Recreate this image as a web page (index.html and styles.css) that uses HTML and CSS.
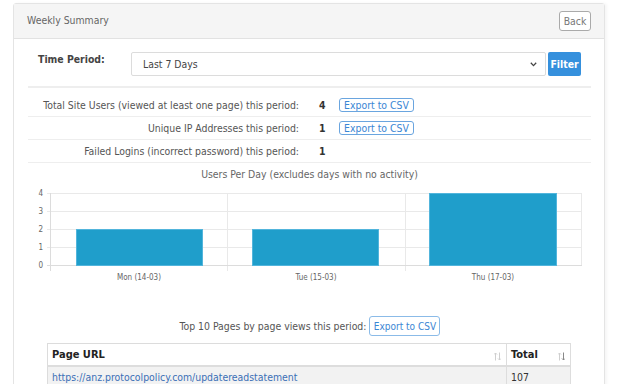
FILE: index.html
```html
<!DOCTYPE html>
<html lang="en">

<head>
    <meta charset="UTF-8">
    <meta name="viewport" content="width=device-width, initial-scale=1.0">
    <title>Weekly Summary</title>
    <link rel="stylesheet" href="styles.css">
</head>

<body>
    <main class="panel">
        <div class="panel__heading">
            <span class="panel__title">Weekly Summary</span>
            <button class="btn btn--back">Back</button>
        </div>

        <div class="panel__body">
            <form class="period">
                <label class="period__label">Time Period:</label>
                <div class="period__select">
                    <span>Last 7 Days</span>
                    <svg width="7" height="5" viewBox="0 0 7 5"><path d="M0.8 0.8 L3.5 3.6 L6.2 0.8" fill="none" stroke="#444" stroke-width="1.3"/></svg>
                </div>
                <button class="btn btn--filter" type="button">Filter</button>
            </form>

            <div class="stats">
                <div class="stats__row">
                    <span class="stats__label">Total Site Users (viewed at least one page) this period:</span>
                    <span class="stats__value">4</span>
                    <a class="btn btn--export">Export to CSV</a>
                </div>
                <div class="stats__row">
                    <span class="stats__label">Unique IP Addresses this period:</span>
                    <span class="stats__value">1</span>
                    <a class="btn btn--export">Export to CSV</a>
                </div>
                <div class="stats__row">
                    <span class="stats__label">Failed Logins (incorrect password) this period:</span>
                    <span class="stats__value">1</span>
                </div>
            </div>

            <h3 class="chart__title">Users Per Day (excludes days with no activity)</h3>
            <svg class="chart" width="563" height="100" viewBox="0 0 563 100">
                <!-- grid -->
                <g stroke="#e9e9e9" stroke-width="1">
                    <line x1="19" y1="8.5" x2="554" y2="8.5"/>
                    <line x1="19" y1="26.5" x2="554" y2="26.5"/>
                    <line x1="19" y1="44.5" x2="554" y2="44.5"/>
                    <line x1="19" y1="62.5" x2="554" y2="62.5"/>
                    <line x1="199.5" y1="8" x2="199.5" y2="86"/>
                    <line x1="377.5" y1="8" x2="377.5" y2="86"/>
                    <line x1="553.5" y1="8" x2="553.5" y2="80"/>
                </g>
                <g stroke="#dcdcdc" stroke-width="1">
                    <line x1="19" y1="80.5" x2="554" y2="80.5"/>
                    <line x1="22.5" y1="8" x2="22.5" y2="86"/>
                </g>
                <!-- bars -->
                <g fill="#1f9ecb" stroke="#52b5dc" stroke-width="1">
                    <rect x="48.5" y="44.5" width="126" height="36"/>
                    <rect x="224.5" y="44.5" width="126" height="36"/>
                    <rect x="401.5" y="8.5" width="127" height="72"/>
                </g>
                <!-- labels -->
                <g class="chart__label" text-anchor="end">
                    <text x="15" y="11">4</text>
                    <text x="15" y="29">3</text>
                    <text x="15" y="47">2</text>
                    <text x="15" y="65">1</text>
                    <text x="15" y="83">0</text>
                </g>
                <g class="chart__label" text-anchor="middle">
                    <text x="111" y="95">Mon (14-03)</text>
                    <text x="288" y="95">Tue (15-03)</text>
                    <text x="465" y="95">Thu (17-03)</text>
                </g>
            </svg>

            <div class="pages">
                <span>Top 10 Pages by page views this period:</span>
                <a class="btn btn--outline">Export to CSV</a>
            </div>

            <table class="pages__table">
                <thead>
                    <tr>
                        <th class="col--url">Page URL
                            <svg class="sort" width="7" height="9" viewBox="0 0 7 9"><path d="M1.5 8.5 V1 M0 2.5 L1.5 1 L3 2.5 M5.5 0.5 V8 M4 6.5 L5.5 8 L7 6.5" fill="none" stroke="#cfcfcf" stroke-width="1"/></svg>
                        </th>
                        <th class="col--total">Total
                            <svg class="sort" width="7" height="9" viewBox="0 0 7 9"><path d="M1.5 8.5 V1 M0 2.5 L1.5 1 L3 2.5" fill="none" stroke="#cfcfcf" stroke-width="1"/><path d="M5.5 0.5 V8 M4 6.5 L5.5 8 L7 6.5" fill="none" stroke="#888" stroke-width="1"/></svg>
                        </th>
                    </tr>
                </thead>
                <tbody>
                    <tr>
                        <td><a href="#">https://anz.protocolpolicy.com/updatereadstatement</a></td>
                        <td>107</td>
                    </tr>
                </tbody>
            </table>
        </div>
    </main>
</body>

</html>
```
FILE: styles.css
```css
* {
    margin: 0;
    padding: 0;
    box-sizing: border-box;
}

body {
    width: 100%;
    height: 100vh;
    overflow: hidden;
    background-color: #fff;
    font-family: "DejaVu Sans Condensed", "DejaVu Sans", sans-serif;
    font-size: 10.4px;
    color: #555;
}

a {
    text-decoration: none;
}

/* panel */
.panel {
    width: 592px;
    margin: 3px 0 0 13px;
    border: 1px solid #e4e4e4;
    border-radius: 3px;
    box-shadow: 2px 0 3px rgba(0, 0, 0, 0.04);
}

.panel__heading {
    display: flex;
    align-items: center;
    justify-content: space-between;
    height: 35px;
    padding: 0 13px 3px 13px;
    background-color: #f5f5f5;
    border-bottom: 1px solid #e2e2e2;
}

.panel__title {
    color: #666;
}

.panel__body {
    padding: 13px 13px 0 14px;
}

/* buttons */
.btn {
    font-family: inherit;
    font-size: 10.4px;
    background: #fff;
    cursor: pointer;
}

.btn--back {
    width: 32px;
    height: 20px;
    margin-top: 3px;
    border: 1px solid #aaa;
    border-radius: 3px;
    color: #777;
}

.btn--filter {
    width: 33px;
    height: 24px;
    margin-left: 2px;
    border: 0;
    border-radius: 2px;
    background-color: #3590dd;
    color: #fff;
    font-weight: bold;
}

.btn--export {
    display: inline-flex;
    align-items: center;
    justify-content: center;
    width: 75px;
    height: 14px;
    border: 1px solid #6aa5df;
    border-radius: 3px;
    color: #3a86d4;
}

.btn--outline {
    display: inline-flex;
    align-items: center;
    justify-content: center;
    width: 71px;
    height: 20px;
    margin-left: 3px;
    border: 1px solid #8bbbe8;
    border-radius: 3px;
    color: #3a86d4;
    font-size: 10px;
}

/* time period form */
.period {
    display: flex;
    align-items: center;
    padding: 0 10px;
    padding-bottom: 10px;
    border-bottom: 2px solid #eee;
}

.period__label {
    width: 93px;
    font-weight: bold;
    color: #444;
    margin-top: -10px;
}

.period__select {
    display: flex;
    align-items: center;
    justify-content: space-between;
    flex: 1;
    height: 24px;
    padding: 0 8px 0 11px;
    border: 1px solid #dcdcdc;
    border-radius: 2px;
    color: #444;
}

/* stats */
.stats {
    margin-top: 6px;
}

.stats__row {
    display: flex;
    align-items: center;
    height: 23px;
    border-bottom: 1px solid #eee;
}

.stats__label {
    width: 271px;
    text-align: right;
}

.stats__value {
    width: 40px;
    padding-left: 20px;
    font-weight: bold;
    color: #333;
}

/* chart */
.chart__title {
    margin-top: 4px;
    font-size: 10.4px;
    font-weight: normal;
    line-height: 14px;
    text-align: center;
    color: #666;
}

.chart {
    display: block;
    margin-top: 4px;
}

.chart__label {
    font-size: 8px;
    fill: #666;
}

/* top pages */
.pages {
    display: flex;
    align-items: center;
    justify-content: center;
    margin-top: 31px;
    padding-left: 1px;
}

.pages__table {
    width: 524px;
    margin: 7px 0 0 19px;
    border-collapse: collapse;
    border: 1px solid #dcdcdc;
}

.pages__table th {
    position: relative;
    height: 22px;
    padding: 0 4px;
    text-align: left;
    font-weight: bold;
    font-size: 11px;
    color: #222;
    border-bottom: 2px solid #ddd;
    border-right: 1px solid #ddd;
}

.col--total {
    width: 64px;
}

.sort {
    position: absolute;
    right: 5px;
    top: 8px;
}

.pages__table td {
    height: 22px;
    padding: 0 4px;
    border-right: 1px solid #ddd;
    color: #333;
}

.pages__table tbody tr:nth-child(odd) {
    background-color: #f2f2f2;
}

.pages__table td a {
    color: #3b6fb6;
}
```
